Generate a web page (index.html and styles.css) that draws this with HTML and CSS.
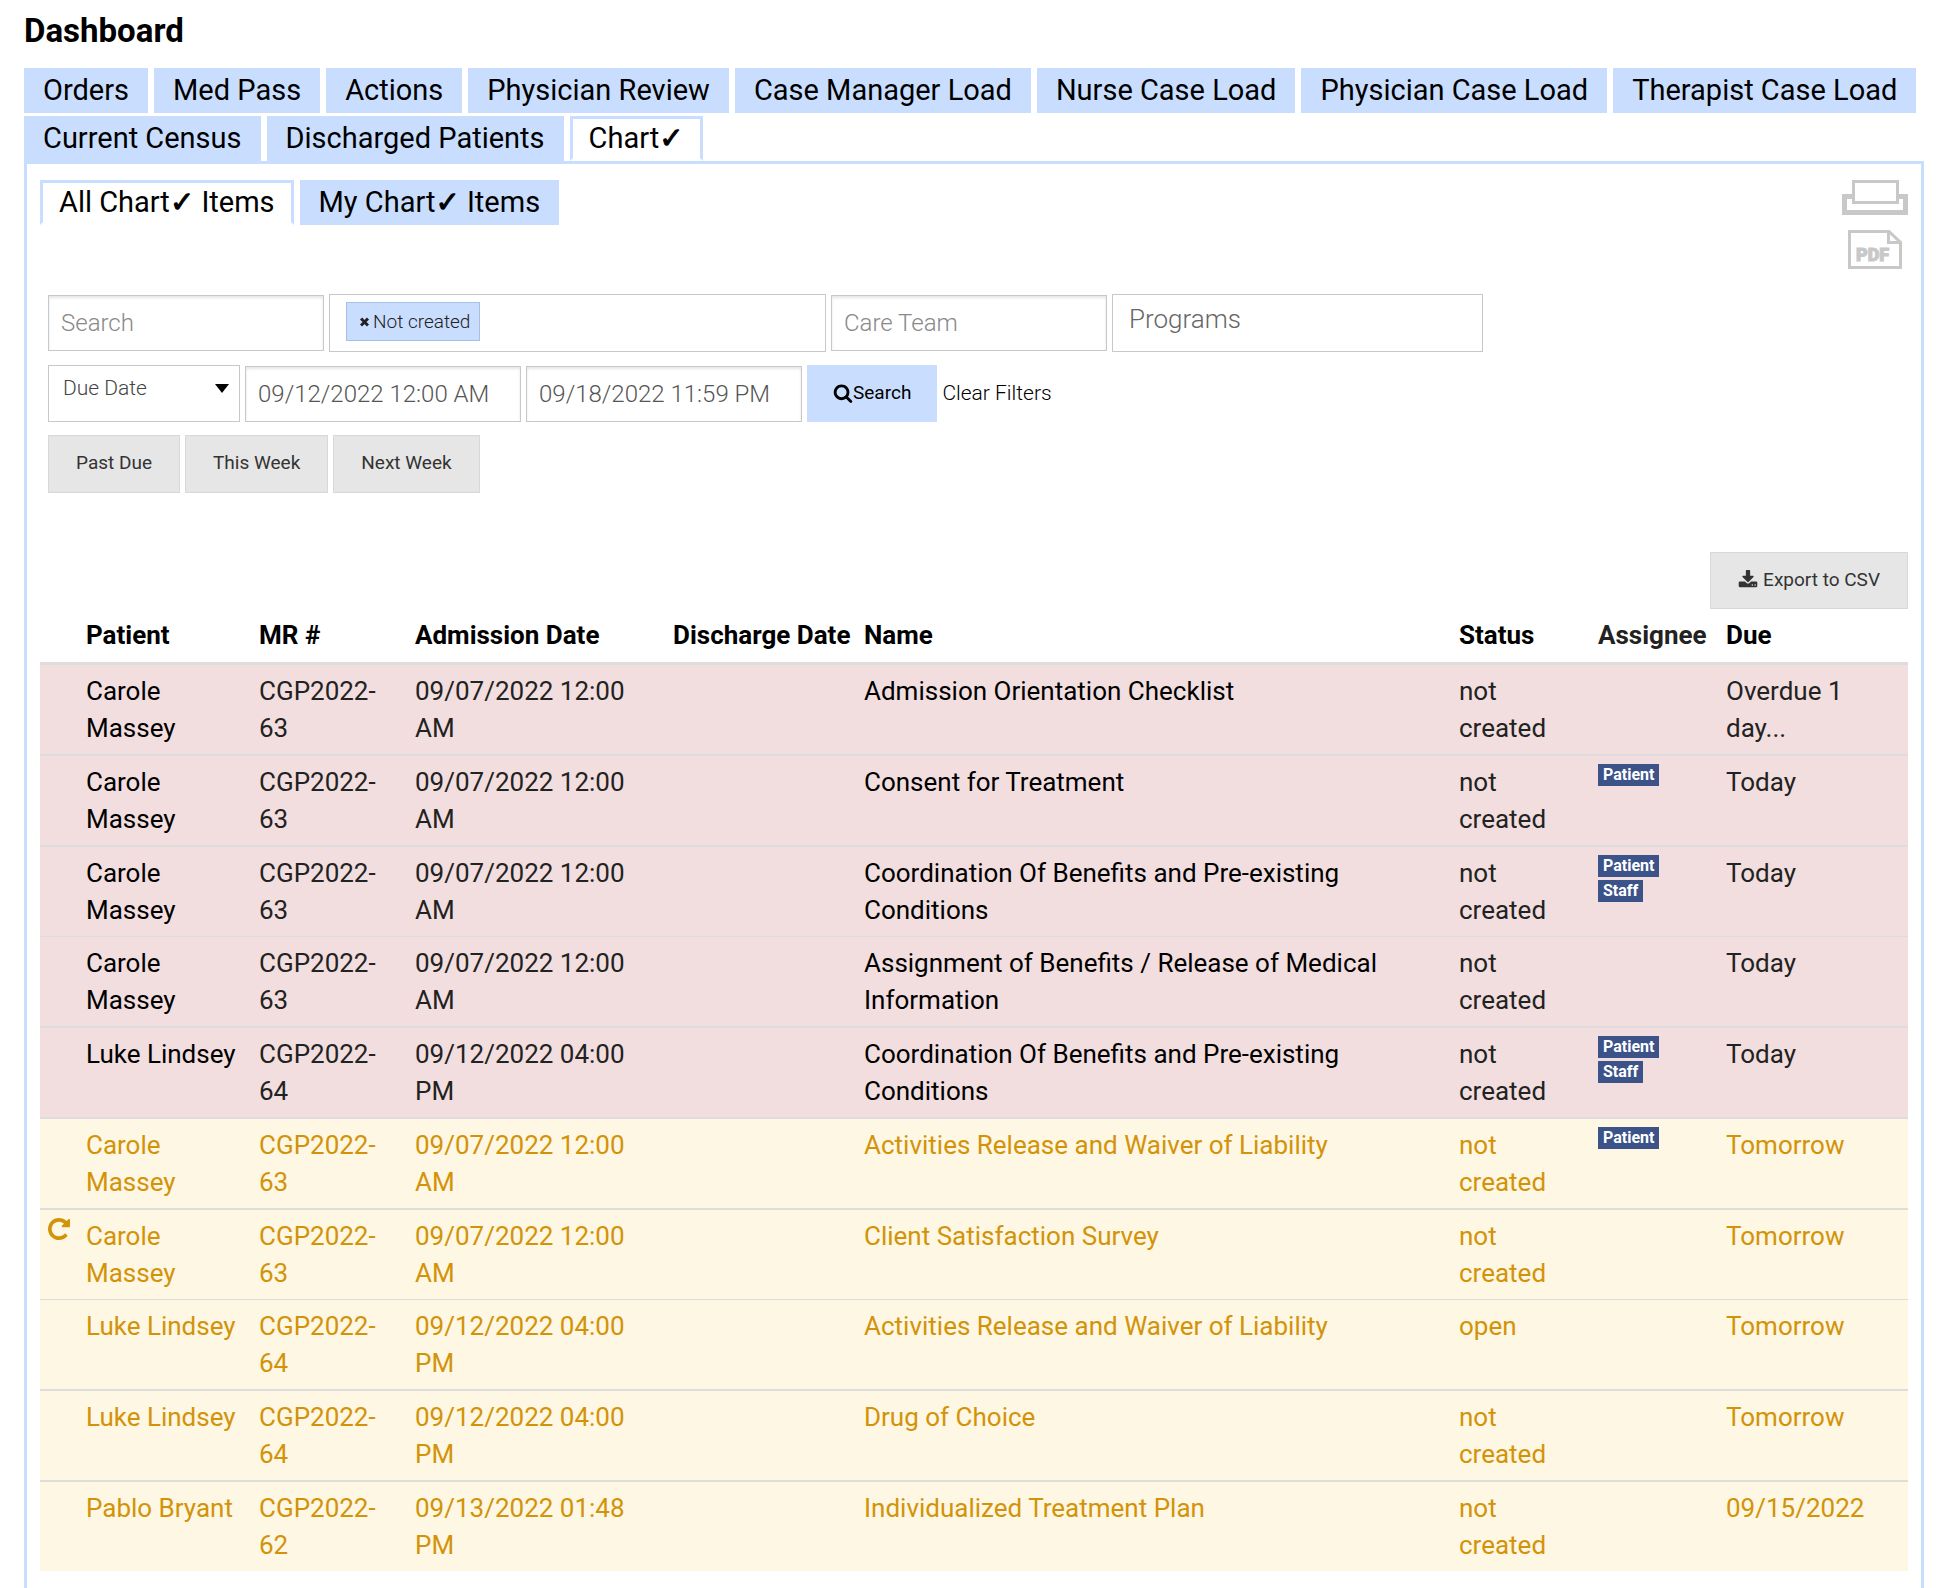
FILE: index.html
```html
<!DOCTYPE html>
<html lang="en">
<head>
  <meta charset="UTF-8" />
  <meta name="viewport" content="width=device-width, initial-scale=1" />
  <title>Dashboard</title>
  <link rel="stylesheet" href="styles.css">
</head>
<body>
  <h1>Dashboard</h1>

  <nav class="tabs">
    <a href="#">Orders</a>
    <a href="#">Med Pass</a>
    <a href="#">Actions</a>
    <a href="#">Physician Review</a>
    <a href="#">Case Manager Load</a>
    <a href="#">Nurse Case Load</a>
    <a href="#">Physician Case Load</a>
    <a href="#">Therapist Case Load</a>
    <a href="#">Current Census</a>
    <a href="#">Discharged Patients</a>
    <a href="#" class="active">Chart<span class="check">✓</span></a>
  </nav>

  <main class="panel">
    <div class="panel-top">
      <nav class="tabs">
        <a href="#" class="active">All Chart<span class="check">✓</span> Items</a>
        <a href="#">My Chart<span class="check">✓</span> Items</a>
      </nav>
      <div class="print-links">
        <a href="#" aria-label="Print">
          <svg width="66" height="35" viewBox="0 0 66 35" fill="none" stroke="#c8c8c8">
            <path d="M12 16.5H2.5v16h61v-16H54" stroke-width="5" />
            <rect x="11.5" y="1.5" width="44" height="21" stroke-width="3" fill="#fff" />
          </svg>
        </a>
        <a href="#" aria-label="PDF">
          <svg width="54" height="39" viewBox="0 0 54 39" fill="none" stroke="#c8c8c8" stroke-width="3">
            <path d="M1.5 1.5H41L52.5 12.5v25h-51z" />
            <path d="M40.5 1.5v11h12" />
            <text x="8" y="31" class="pdf-text">PDF</text>
          </svg>
        </a>
      </div>
    </div>

    <form class="filters">
      <div class="filter-row">
        <input type="text" class="field" placeholder="Search" aria-label="Search" />
        <div class="field tokens">
          <button type="button" class="token">
            <svg width="9" height="10" viewBox="0 0 9 10" stroke="#222" stroke-width="3"><path d="M1 1.5l7 7M8 1.5l-7 7" /></svg>
            Not created
          </button>
          <input type="text" aria-label="Statuses" />
        </div>
        <input type="text" class="field" placeholder="Care Team" aria-label="Care Team" />
        <input type="text" class="field programs" placeholder="Programs" aria-label="Programs" />
      </div>
      <div class="filter-row">
        <div class="select-wrap">
          <select aria-label="Date type">
            <option>Due Date</option>
          </select>
        </div>
        <input type="text" class="field" value="09/12/2022 12:00 AM" aria-label="From" />
        <input type="text" class="field" value="09/18/2022 11:59 PM" aria-label="To" />
        <button type="button" class="btn btn-search">
          <svg width="20" height="20" viewBox="0 0 1792 1792"><path d="M1216 832q0-185-131.5-316.5t-316.5-131.5-316.5 131.5-131.5 316.5 131.5 316.5 316.5 131.5 316.5-131.5 131.5-316.5zm512 832q0 52-38 90t-90 38q-54 0-90-38l-343-342q-179 124-399 124-143 0-273.5-55.5t-225-150-150-225-55.5-273.5 55.5-273.5 150-225 225-150 273.5-55.5 273.5 55.5 225 150 150 225 55.5 273.5q0 220-124 399l343 343q37 37 37 90z" /></svg>Search
        </button>
        <a href="#" class="clear">Clear Filters</a>
      </div>
      <div class="filter-row">
        <button type="button" class="btn">Past Due</button>
        <button type="button" class="btn">This Week</button>
        <button type="button" class="btn">Next Week</button>
      </div>
    </form>

    <div class="export">
      <button type="button" class="btn">
        <svg width="20" height="20" viewBox="0 0 1792 1792" fill="#333"><path d="M1344 1344q0-26-19-45t-45-19-45 19-19 45 19 45 45 19 45-19 19-45zm256 0q0-26-19-45t-45-19-45 19-19 45 19 45 45 19 45-19 19-45zm128-224v320q0 40-28 68t-68 28h-1472q-40 0-68-28t-28-68v-320q0-40 28-68t68-28h465l135 136q58 56 136 56t136-56l136-136h464q40 0 68 28t28 68zm-325-569q17 41-14 70l-448 448q-18 19-45 19t-45-19l-448-448q-31-29-14-70 17-39 59-39h256v-448q0-26 19-45t45-19h256q26 0 45 19t19 45v448h256q42 0 59 39z" /></svg>
        Export to CSV
      </button>
    </div>

    <table>
      <colgroup>
        <col class="col-icon" />
        <col class="col-patient" />
        <col class="col-mr" />
        <col class="col-admission" />
        <col class="col-discharge" />
        <col />
        <col class="col-status" />
        <col class="col-assignee" />
        <col class="col-due" />
      </colgroup>
      <thead>
        <tr>
          <th></th>
          <th>Patient</th>
          <th>MR #</th>
          <th>Admission Date</th>
          <th>Discharge Date</th>
          <th>Name</th>
          <th>Status</th>
          <th class="plain">Assignee</th>
          <th>Due</th>
        </tr>
      </thead>
      <tbody>
        <tr class="overdue">
          <td></td>
          <td><a href="#">Carole Massey</a></td>
          <td>CGP2022-63</td>
          <td>09/07/2022 12:00 AM</td>
          <td></td>
          <td><a href="#">Admission Orientation Checklist</a></td>
          <td>not created</td>
          <td></td>
          <td>Overdue 1 day...</td>
        </tr>
        <tr class="overdue">
          <td></td>
          <td><a href="#">Carole Massey</a></td>
          <td>CGP2022-63</td>
          <td>09/07/2022 12:00 AM</td>
          <td></td>
          <td><a href="#">Consent for Treatment</a></td>
          <td>not created</td>
          <td><div class="labels"><span>Patient</span></div></td>
          <td>Today</td>
        </tr>
        <tr class="overdue">
          <td></td>
          <td><a href="#">Carole Massey</a></td>
          <td>CGP2022-63</td>
          <td>09/07/2022 12:00 AM</td>
          <td></td>
          <td><a href="#">Coordination Of Benefits and Pre-existing Conditions</a></td>
          <td>not created</td>
          <td><div class="labels"><span>Patient</span><span>Staff</span></div></td>
          <td>Today</td>
        </tr>
        <tr class="overdue">
          <td></td>
          <td><a href="#">Carole Massey</a></td>
          <td>CGP2022-63</td>
          <td>09/07/2022 12:00 AM</td>
          <td></td>
          <td><a href="#">Assignment of Benefits / Release of Medical Information</a></td>
          <td>not created</td>
          <td></td>
          <td>Today</td>
        </tr>
        <tr class="overdue">
          <td></td>
          <td><a href="#">Luke Lindsey</a></td>
          <td>CGP2022-64</td>
          <td>09/12/2022 04:00 PM</td>
          <td></td>
          <td><a href="#">Coordination Of Benefits and Pre-existing Conditions</a></td>
          <td>not created</td>
          <td><div class="labels"><span>Patient</span><span>Staff</span></div></td>
          <td>Today</td>
        </tr>
        <tr class="upcoming">
          <td></td>
          <td><a href="#">Carole Massey</a></td>
          <td>CGP2022-63</td>
          <td>09/07/2022 12:00 AM</td>
          <td></td>
          <td><a href="#">Activities Release and Waiver of Liability</a></td>
          <td>not created</td>
          <td><div class="labels"><span>Patient</span></div></td>
          <td>Tomorrow</td>
        </tr>
        <tr class="upcoming">
          <td>
            <svg class="repeat" width="22" height="22" viewBox="128 128 1536 1536"><path d="M1664 256v448q0 26-19 45t-45 19h-448q-42 0-59-40-17-39 14-69l138-138q-148-137-349-137-104 0-198.5 40.5t-163.5 109.5-109.5 163.5-40.5 198.5 40.5 198.5 109.5 163.5 163.5 109.5 198.5 40.5q119 0 225-52t179-147q7-10 23-12 15 0 25 9l137 138q9 8 9.5 20.5t-7.5 22.5q-109 132-264 204.5t-327 72.5q-156 0-298-61t-245-164-164-245-61-298 61-298 164-245 245-164 298-61q147 0 284.5 55.5t244.5 156.5l130-129q29-31 70-14 39 17 39 59z" /></svg>
          </td>
          <td><a href="#">Carole Massey</a></td>
          <td>CGP2022-63</td>
          <td>09/07/2022 12:00 AM</td>
          <td></td>
          <td><a href="#">Client Satisfaction Survey</a></td>
          <td>not created</td>
          <td></td>
          <td>Tomorrow</td>
        </tr>
        <tr class="upcoming">
          <td></td>
          <td><a href="#">Luke Lindsey</a></td>
          <td>CGP2022-64</td>
          <td>09/12/2022 04:00 PM</td>
          <td></td>
          <td><a href="#">Activities Release and Waiver of Liability</a></td>
          <td>open</td>
          <td></td>
          <td>Tomorrow</td>
        </tr>
        <tr class="upcoming">
          <td></td>
          <td><a href="#">Luke Lindsey</a></td>
          <td>CGP2022-64</td>
          <td>09/12/2022 04:00 PM</td>
          <td></td>
          <td><a href="#">Drug of Choice</a></td>
          <td>not created</td>
          <td></td>
          <td>Tomorrow</td>
        </tr>
        <tr class="upcoming">
          <td></td>
          <td><a href="#">Pablo Bryant</a></td>
          <td>CGP2022-62</td>
          <td>09/13/2022 01:48 PM</td>
          <td></td>
          <td><a href="#">Individualized Treatment Plan</a></td>
          <td>not created</td>
          <td></td>
          <td>09/15/2022</td>
        </tr>
      </tbody>
    </table>
  </main>
</body>
</html>
```
FILE: styles.css
```css
:root {
  --blue: #c9deff;
  --border: #c8c8c8;
  --grey: #e6e6e6;
  --text: #222;
  --amber: #d39309;
}

* {
  box-sizing: border-box;
}

body {
  margin: 0;
  padding: 11px 14px 0 24px;
  min-height: 100vh;
  display: flex;
  flex-direction: column;
  background: #fff;
  color: var(--text);
  font-family: Roboto, "DejaVu Sans", sans-serif;
  font-size: 26px;
  line-height: 37px;
}

a {
  color: #000;
  text-decoration: none;
}

h1 {
  margin: 0 0 17px;
  color: #000;
  font-size: 33px;
  line-height: 40px;
}

/* Tabs */
.tabs {
  display: flex;
  flex-wrap: wrap;
  gap: 3px 6px;
}

.tabs a {
  height: 45px;
  padding: 0 16px;
  border: 3px solid var(--blue);
  background: var(--blue);
  font-size: 29px;
  line-height: 38px;
}

.tabs a.active {
  background: #fff;
  border-bottom-color: #fff;
}

.check {
  -webkit-text-stroke: 1px #000;
}

.panel {
  flex: 1;
  padding: 16px 13px;
  border: 3px solid var(--blue);
  border-bottom: 0;
}

.panel-top {
  display: flex;
  justify-content: space-between;
  align-items: flex-start;
}

.print-links {
  display: flex;
  flex-direction: column;
  align-items: center;
  gap: 15px;
}

.print-links svg {
  display: block;
}

.pdf-text {
  fill: #c8c8c8;
  stroke-width: 1px;
  font-size: 18px;
  font-weight: 900;
}

/* Filters */
.filters {
  display: flex;
  flex-direction: column;
  gap: 13px;
  padding: 25px 8px 0;
}

.filter-row {
  display: flex;
  align-items: center;
  gap: 5px;
}

input,
select,
button {
  font-family: inherit;
}

.field {
  width: 276px;
  height: 56px;
  padding: 0 12px;
  border: 1px solid var(--border);
  background: #fff;
  box-shadow: inset 0 2px 3px rgba(0, 0, 0, 0.1);
  color: #555;
  font-size: 24px;
  font-weight: 300;
}

.field::placeholder {
  color: #888;
}

.tokens {
  display: flex;
  align-items: flex-start;
  width: 497px;
  height: 58px;
  padding: 7px 16px;
  box-shadow: none;
}

.tokens input {
  flex: 1;
  min-width: 0;
  height: 39px;
  border: 0;
}

.token {
  display: flex;
  align-items: center;
  gap: 4px;
  height: 39px;
  padding: 0 9px 0 13px;
  border: 1px solid #a6bfe6;
  background: var(--blue);
  color: var(--text);
  font-size: 19px;
  font-weight: 300;
  white-space: nowrap;
}

.programs {
  width: 371px;
  height: 58px;
  padding: 0 16px 8px;
  box-shadow: none;
  font-size: 26px;
}

.programs::placeholder {
  color: #666;
}

.select-wrap {
  position: relative;
}

.select-wrap::after {
  content: "";
  position: absolute;
  top: 19px;
  right: 11px;
  border: 7px solid transparent;
  border-top: 9px solid #000;
  border-bottom: 0;
  pointer-events: none;
}

select {
  display: block;
  appearance: none;
  width: 192px;
  height: 57px;
  padding: 0 30px 12px 14px;
  border: 1px solid var(--border);
  border-radius: 0;
  background: #fff;
  color: #444;
  font-size: 21px;
  font-weight: 300;
}

.btn {
  display: flex;
  align-items: center;
  gap: 5px;
  height: 58px;
  padding: 0 27px 4px;
  border: 1px solid #d8d8d8;
  background: var(--grey);
  color: #333;
  font-size: 19px;
}

.btn-search {
  gap: 0;
  height: 57px;
  padding: 0 25px 2px;
  border-color: var(--blue);
  background: var(--blue);
  color: #000;
}

.clear {
  font-size: 21px;
  font-weight: 300;
}

.export {
  display: flex;
  justify-content: flex-end;
  margin-top: 59px;
}

.export .btn {
  height: 57px;
  padding-bottom: 2px;
}

/* Items table */
table {
  width: 100%;
  table-layout: fixed;
  border-collapse: separate;
  border-spacing: 0;
}

.col-icon { width: 38px; }
.col-patient { width: 173px; }
.col-mr { width: 156px; }
.col-admission { width: 258px; }
.col-discharge { width: 191px; }
.col-status { width: 139px; }
.col-assignee { width: 128px; }
.col-due { width: 190px; }

th,
td {
  padding: 8px 8px 7px;
  text-align: left;
  vertical-align: top;
}

th {
  padding: 8px;
  border-bottom: 3px solid #ddd;
  color: #000;
  white-space: nowrap;
}

th.plain {
  color: var(--text);
}

td {
  border-top: 2px solid #ddd;
}

tr:nth-child(4n) td {
  border-top-width: 1px;
}

tbody tr:first-child td {
  border-top: 0;
}

.overdue td {
  background: #f2dede;
}

.upcoming td {
  background: #fdf7e3;
}

.upcoming,
.upcoming a {
  color: var(--amber);
}

.repeat {
  display: block;
  fill: var(--amber);
}

.labels {
  display: flex;
  flex-direction: column;
  align-items: flex-start;
  gap: 3px;
}

.labels span {
  padding: 0 5px;
  background: #3b5389;
  color: #fff;
  font-size: 16px;
  font-weight: bold;
  line-height: 22px;
}
```
